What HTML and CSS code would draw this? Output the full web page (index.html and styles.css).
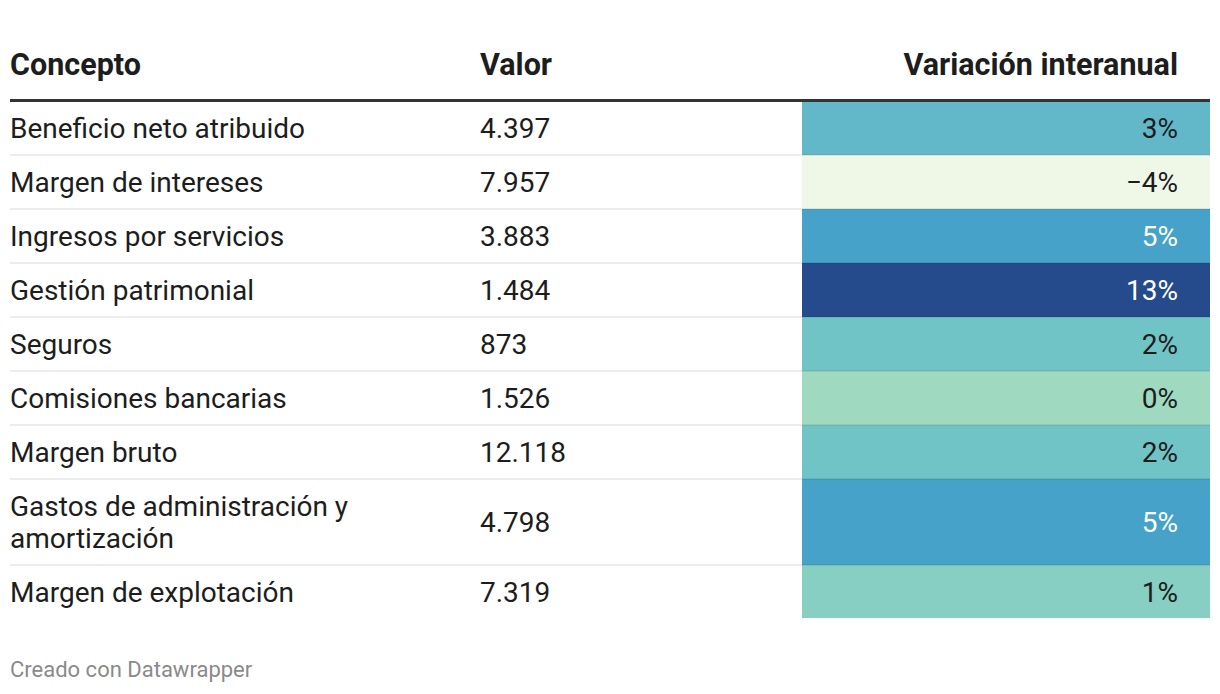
FILE: index.html
```html
<!DOCTYPE html>
<html lang="es">
<head>
<meta charset="utf-8">
<title>Tabla</title>
<link rel="stylesheet" href="styles.css">
</head>
<body>
<div class="chart">
  <table class="data">
    <thead>
      <tr>
        <th class="col-name">Concepto</th>
        <th class="col-val">Valor</th>
        <th class="col-var">Variación interanual</th>
      </tr>
    </thead>
    <tbody>
      <tr><td class="col-name">Beneficio neto atribuido</td><td class="col-val">4.397</td><td class="col-var c3">3%</td></tr>
      <tr><td class="col-name">Margen de intereses</td><td class="col-val">7.957</td><td class="col-var cm4">−4%</td></tr>
      <tr><td class="col-name">Ingresos por servicios</td><td class="col-val">3.883</td><td class="col-var c5 inv">5%</td></tr>
      <tr><td class="col-name">Gestión patrimonial</td><td class="col-val">1.484</td><td class="col-var c13 inv">13%</td></tr>
      <tr><td class="col-name">Seguros</td><td class="col-val">873</td><td class="col-var c2">2%</td></tr>
      <tr><td class="col-name">Comisiones bancarias</td><td class="col-val">1.526</td><td class="col-var c0">0%</td></tr>
      <tr><td class="col-name">Margen bruto</td><td class="col-val">12.118</td><td class="col-var c2">2%</td></tr>
      <tr><td class="col-name">Gastos de administración y amortización</td><td class="col-val">4.798</td><td class="col-var c5 inv">5%</td></tr>
      <tr><td class="col-name">Margen de explotación</td><td class="col-val">7.319</td><td class="col-var c1">1%</td></tr>
    </tbody>
  </table>
  <div class="footer">Creado con Datawrapper</div>
</div>
</body>
</html>
```

FILE: styles.css
```css
html, body {
  margin: 0;
  padding: 0;
  background: #ffffff;
}

.chart {
  padding: 40px 10px 0;
  font-family: Roboto, "Liberation Sans", sans-serif;
  color: #1d1d1d;
}

.data {
  width: 1200px;
  border-collapse: collapse;
  table-layout: fixed;
  font-size: 28px;
  line-height: 32px;
}

.data th,
.data td {
  box-sizing: border-box;
}

.data th {
  font-size: 30.5px;
  font-weight: 700;
  text-align: left;
  padding: 9px 0 18px;
  border-bottom: 3px solid #333333;
  color: #1d1d1d;
}

.data td {
  padding: 11px 0 9px;
  border-bottom: 2px solid rgba(0, 0, 0, 0.07);
  vertical-align: middle;
}

.data tbody tr:last-child td {
  border-bottom: none;
}

.data .col-name {
  width: 470px;
  padding-right: 20px;
}

.data .col-val {
  width: 322px;
}

.data .col-var {
  width: 408px;
  text-align: right;
  padding-right: 32px;
}

.c3 { background: #62b8c9; }
.cm4 { background: #eff7e7; }
.c5 { background: #46a2c8; }
.c13 { background: #264b8c; }
.c2 { background: #70c4c6; }
.c0 { background: #9fd9bf; }
.c1 { background: #87cec3; }

.inv { color: #ffffff; }

.footer {
  margin-top: 40px;
  font-size: 22px;
  line-height: 24px;
  color: #8a8a8a;
}
```
